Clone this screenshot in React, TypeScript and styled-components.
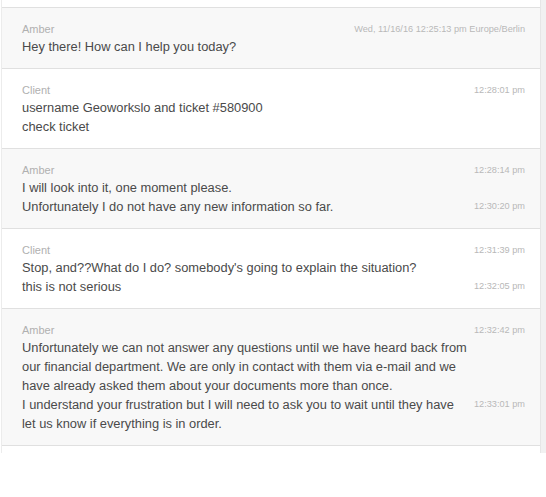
import React from "react";
import styled, { createGlobalStyle } from "styled-components";

const Global = createGlobalStyle`
  html, body { margin: 0; padding: 0; background: #fff; }
  body { font-family: "Liberation Sans", Arial, sans-serif; }
`;

const Page = styled.div`
  display: flex;
  align-items: stretch;
  width: 546px;
`;

const Transcript = styled.div`
  width: 538px;
  margin-left: 1px;
  padding-top: 7px;
  border-left: 1px solid #ececec;
  border-right: 1px solid #e6e6e6;
`;

const Track = styled.div`
  width: 5px;
  height: 453px;
  background: #f1f1f1;
`;

const Block = styled.div<{ $shade: boolean }>`
  background: ${(p) => (p.$shade ? "#f8f8f8" : "#ffffff")};
  border-top: 1px solid #e0e0e0;
  padding: 13px 15px 12px 20px;
  &:last-child { border-bottom: 1px solid #e0e0e0; }
`;

const Header = styled.div`
  display: flex;
  justify-content: space-between;
  align-items: center;
  height: 16px;
`;

const Name = styled.span`
  font-size: 11px;
  color: #b0b0b0;
`;

const Time = styled.span`
  font-size: 9.2px;
  color: #b8b8b8;
  white-space: nowrap;
`;

const Line = styled.div`
  display: flex;
  align-items: flex-start;
`;

const Text = styled.div`
  flex: 1;
  font-size: 12.85px;
  line-height: 19px;
  color: #4a4a4a;
`;

const LineTime = styled.div`
  width: 55px;
  text-align: right;
  line-height: 19px;
  font-size: 9.2px;
  color: #b8b8b8;
`;

type Msg = { text: React.ReactNode; time?: string };
type Entry = { who: string; head: string; msgs: Msg[] };

const data: Entry[] = [
  {
    who: "Amber",
    head: "Wed, 11/16/16 12:25:13 pm Europe/Berlin",
    msgs: [{ text: "Hey there! How can I help you today?" }],
  },
  {
    who: "Client",
    head: "12:28:01 pm",
    msgs: [
      {
        text: (
          <>
            username Geoworkslo and ticket #580900
            <br />
            check ticket
          </>
        ),
      },
    ],
  },
  {
    who: "Amber",
    head: "12:28:14 pm",
    msgs: [
      { text: "I will look into it, one moment please." },
      { text: "Unfortunately I do not have any new information so far.", time: "12:30:20 pm" },
    ],
  },
  {
    who: "Client",
    head: "12:31:39 pm",
    msgs: [
      { text: "Stop, and??What do I do? somebody's going to explain the situation?" },
      { text: "this is not serious", time: "12:32:05 pm" },
    ],
  },
  {
    who: "Amber",
    head: "12:32:42 pm",
    msgs: [
      {
        text:
          "Unfortunately we can not answer any questions until we have heard back from our financial department. We are only in contact with them via e-mail and we have already asked them about your documents more than once.",
      },
      {
        text: "I understand your frustration but I will need to ask you to wait until they have let us know if everything is in order.",
        time: "12:33:01 pm",
      },
    ],
  },
];

export default function App() {
  return (
    <>
      <Global />
      <Page>
        <Transcript>
          {data.map((e, i) => (
            <Block key={i} $shade={e.who === "Amber"}>
              <Header>
                <Name>{e.who}</Name>
                <Time>{e.head}</Time>
              </Header>
              {e.msgs.map((m, j) => (
                <Line key={j}>
                  <Text>{m.text}</Text>
                  <LineTime>{m.time ?? ""}</LineTime>
                </Line>
              ))}
            </Block>
          ))}
        </Transcript>
        <Track />
      </Page>
    </>
  );
}
